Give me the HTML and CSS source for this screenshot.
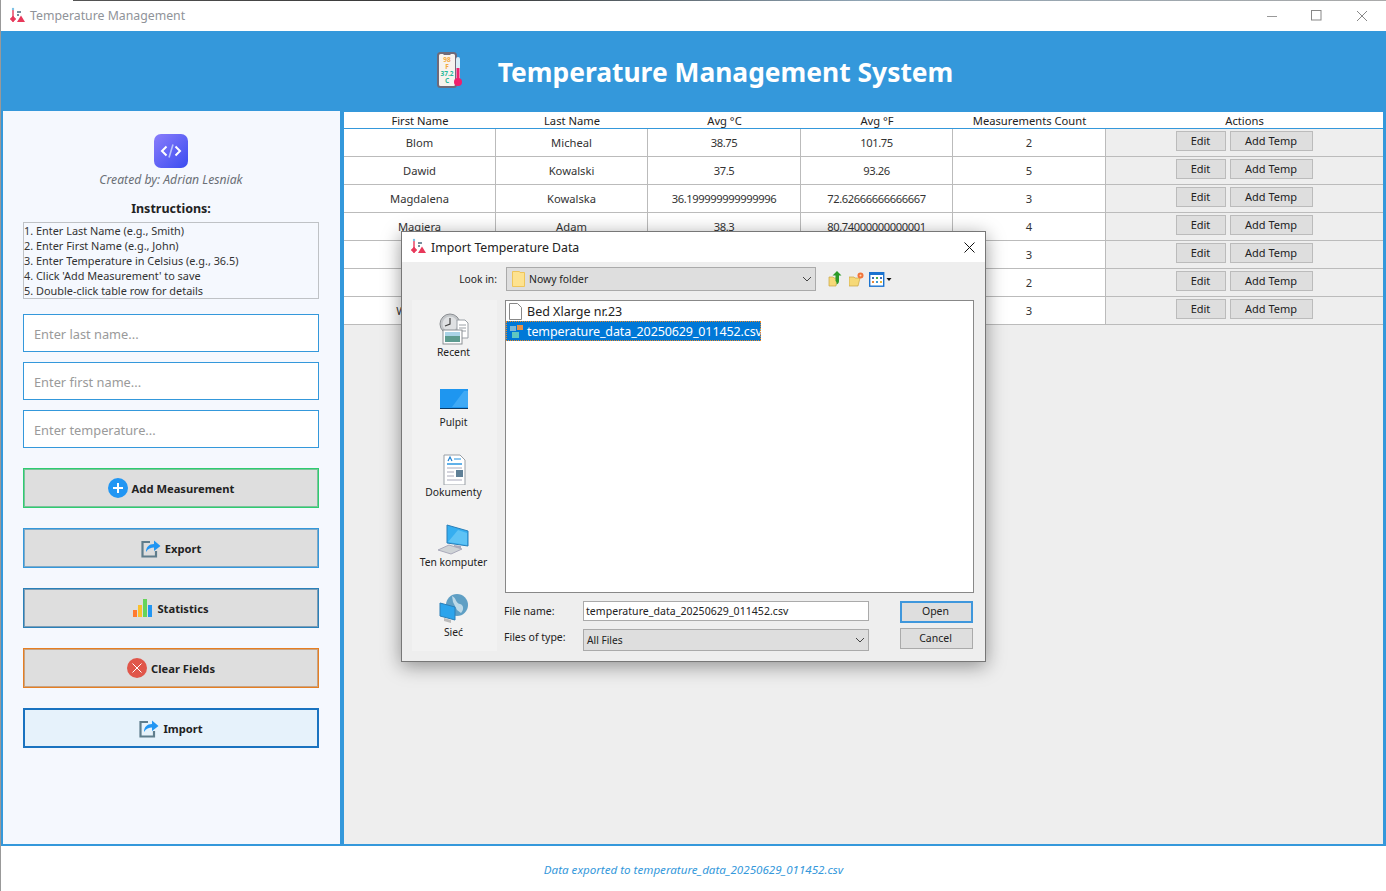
FILE: index.html
```html
<!DOCTYPE html>
<html lang="en">
<head>
<meta charset="utf-8">
<title>Temperature Management</title>
<link rel="stylesheet" href="styles.css">
</head>
<body>
<div class="window">
  <div class="desk-strip"></div>
  <div class="titlebar">
    <svg class="app-icon" width="18" height="18" viewBox="0 0 18 18"><path d="M4 1v10" stroke="#e8385a" stroke-width="1.4"/><circle cx="4" cy="2" r="1.2" fill="#7cc4e8"/><path d="M1 12h6M4 9l-2.5 3L4 15l2.5-3z" fill="#e8385a" stroke="#e8385a" stroke-width=".8"/><path d="M8 5h4M8 8h2" stroke="#4a6a7c" stroke-width="1.3"/><path d="M12 8.500l4 6.500H8z" fill="#e8385a"/></svg>
    <span class="app-title">Temperature Management</span>
    <div class="win-controls">
      <svg width="12" height="12" viewBox="0 0 12 12"><path d="M1 6.500h10" stroke="#999"/></svg>
      <svg width="12" height="12" viewBox="0 0 12 12"><rect x=".5" y=".5" width="9.500" height="9.500" fill="none" stroke="#888"/></svg>
      <svg width="12" height="12" viewBox="0 0 12 12"><path d="M1 1l10 10M11 1L1 11" stroke="#888"/></svg>
    </div>
  </div>

  <header class="banner">
    <svg class="banner-icon" width="30" height="40" viewBox="0 0 30 40">
      <rect x="2" y="1" width="18" height="34" rx="2.500" fill="#f7f3ee" stroke="#6f6a78" stroke-width="2"/>
      <path d="M7.500 1.500h7v1.500h-7z" fill="#6f6a78"/>
      <text x="11" y="10" class="ti ti-o">98</text>
      <text x="11" y="17" class="ti ti-o">F</text>
      <text x="11" y="24" class="ti ti-g">37.2</text>
      <text x="11" y="31" class="ti ti-g">C</text>
      <rect x="20" y="5" width="4" height="24" rx="2" fill="#d8eef8"/>
      <rect x="20.500" y="16" width="3" height="12" fill="#ef1f6b"/>
      <circle cx="22" cy="30" r="4" fill="#ef1f6b"/>
    </svg>
    <h1 class="banner-title">Temperature Management System</h1>
  </header>

  <main class="main">
    <aside class="sidebar">
      <svg class="logo" width="34" height="34" viewBox="0 0 34 34">
        <defs><linearGradient id="lg" x1="0" y1="0" x2="1" y2="1"><stop offset="0" stop-color="#8a7dfb"/><stop offset="1" stop-color="#3a4cf0"/></linearGradient></defs>
        <rect width="34" height="34" rx="7" fill="url(#lg)"/>
        <path d="M12.500 12.500L8 17l4.500 4.500M21.500 12.500L26 17l-4.500 4.500" fill="none" stroke="#fff" stroke-width="2"/>
        <path d="M19 10.500L15 23.500" stroke="#b9c4fb" stroke-width="1.600"/>
      </svg>
      <p class="credit">Created by: Adrian Lesniak</p>
      <h2 class="instr-head">Instructions:</h2>
      <div class="instr">
        <div>1. Enter Last Name (e.g., Smith)</div>
        <div>2. Enter First Name (e.g., John)</div>
        <div>3. Enter Temperature in Celsius (e.g., 36.5)</div>
        <div>4. Click 'Add Measurement' to save</div>
        <div>5. Double-click table row for details</div>
      </div>
      <div class="fields">
        <div class="field">Enter last name...</div>
        <div class="field">Enter first name...</div>
        <div class="field">Enter temperature...</div>
      </div>
      <div class="actions">
        <button class="act act-green">
          <svg width="20" height="20" viewBox="0 0 20 20"><circle cx="10" cy="10" r="10" fill="#2196f3"/><path d="M10 5v10M5 10h10" stroke="#fff" stroke-width="2"/></svg>
          <span>Add Measurement</span>
        </button>
        <button class="act act-blue">
          <svg width="20" height="20" viewBox="0 0 20 20"><path d="M9 4H1.500v14.500H15V13" fill="none" stroke="#5f7d8c" stroke-width="2.200"/><path d="M5 14c0-5 3-8 8-8V2.500l6.500 5.500-6.500 5V9.500c-3 0-6 1-8 4.500z" fill="#2196f3"/></svg>
          <span>Export</span>
        </button>
        <button class="act act-navy">
          <svg width="20" height="20" viewBox="0 0 20 20"><rect x="0" y="12" width="4" height="7" fill="#ff7a2f"/><rect x="5" y="7" width="4" height="12" fill="#fbc02d"/><rect x="10" y="1" width="4" height="18" fill="#66d45a"/><rect x="15" y="7" width="4" height="12" fill="#2196f3"/></svg>
          <span>Statistics</span>
        </button>
        <button class="act act-orange">
          <svg width="20" height="20" viewBox="0 0 20 20"><circle cx="10" cy="10" r="10" fill="#e0564a"/><path d="M5.500 5.500l9 9M14.500 5.500l-9 9" stroke="#fff" stroke-width="1"/></svg>
          <span>Clear Fields</span>
        </button>
        <button class="act act-import">
          <svg width="20" height="20" viewBox="0 0 20 20"><path d="M9 4H1.500v14.500H15V13" fill="none" stroke="#5f7d8c" stroke-width="2.200"/><path d="M5 14c0-5 3-8 8-8V2.500l6.500 5.500-6.500 5V9.500c-3 0-6 1-8 4.500z" fill="#2196f3"/></svg>
          <span>Import</span>
        </button>
      </div>
    </aside>

    <section class="table-area">
      <table class="grid">
        <colgroup><col class="c1"><col class="c2"><col class="c3"><col class="c4"><col class="c5"><col></colgroup>
        <thead>
          <tr><th>First Name</th><th>Last Name</th><th>Avg °C</th><th>Avg °F</th><th>Measurements Count</th><th>Actions</th></tr>
        </thead>
        <tbody>
          <tr><td>Blom</td><td>Micheal</td><td class="n">38.75</td><td class="n">101.75</td><td>2</td><td class="acts"><div class="acts-in"><span class="mini mini-e">Edit</span><span class="mini mini-a">Add Temp</span></div></td></tr>
          <tr><td>Dawid</td><td>Kowalski</td><td class="n">37.5</td><td class="n">93.26</td><td>5</td><td class="acts"><div class="acts-in"><span class="mini mini-e">Edit</span><span class="mini mini-a">Add Temp</span></div></td></tr>
          <tr><td>Magdalena</td><td>Kowalska</td><td class="n">36.199999999999996</td><td class="n">72.62666666666667</td><td>3</td><td class="acts"><div class="acts-in"><span class="mini mini-e">Edit</span><span class="mini mini-a">Add Temp</span></div></td></tr>
          <tr><td>Magiera</td><td>Adam</td><td class="n">38.3</td><td class="n">80.74000000000001</td><td>4</td><td class="acts"><div class="acts-in"><span class="mini mini-e">Edit</span><span class="mini mini-a">Add Temp</span></div></td></tr>
          <tr><td></td><td></td><td></td><td></td><td>3</td><td class="acts"><div class="acts-in"><span class="mini mini-e">Edit</span><span class="mini mini-a">Add Temp</span></div></td></tr>
          <tr><td></td><td></td><td></td><td></td><td>2</td><td class="acts"><div class="acts-in"><span class="mini mini-e">Edit</span><span class="mini mini-a">Add Temp</span></div></td></tr>
          <tr><td>Wojciech</td><td></td><td></td><td></td><td>3</td><td class="acts"><div class="acts-in"><span class="mini mini-e">Edit</span><span class="mini mini-a">Add Temp</span></div></td></tr>
        </tbody>
      </table>
    </section>
  </main>

  <footer class="status">Data exported to temperature_data_20250629_011452.csv</footer>

  <div class="dialog">
    <div class="dlg-title">
      <svg width="18" height="18" viewBox="0 0 18 18"><path d="M4 1v10" stroke="#e8385a" stroke-width="1.4"/><circle cx="4" cy="2" r="1.2" fill="#7cc4e8"/><path d="M1 12h6M4 9l-2.500 3L4 15l2.500-3z" fill="#e8385a" stroke="#e8385a" stroke-width=".8"/><path d="M8 5h4M8 8h2" stroke="#4a6a7c" stroke-width="1.300"/><path d="M12 8.500l4 6.500H8z" fill="#e8385a"/></svg>
      <span class="dlg-name">Import Temperature Data</span>
      <svg class="dlg-close" width="11" height="11" viewBox="0 0 11 11"><path d="M.5.5l10 10M10.500.5l-10 10" stroke="#111"/></svg>
    </div>
    <div class="dlg-body">
      <div class="look-row">
        <span class="look-label">Look in:</span>
        <div class="combo combo-look">
          <svg width="13" height="16" viewBox="0 0 13 16"><path d="M.5.500h7l.5 1h4.500v14H.5z" fill="#fde28f" stroke="#eec55a"/></svg>
          <span>Nowy folder</span>
          <svg class="chev" width="10" height="6" viewBox="0 0 10 6"><path d="M1 1l4 4 4-4" fill="none" stroke="#444"/></svg>
        </div>
        <div class="tools">
          <svg width="16" height="16" viewBox="0 0 16 16"><path d="M1 6h4l1 1h3l-1 8H1z" fill="#f6d978" stroke="#c9a542" stroke-width=".7"/><path d="M9 0l4.500 4.500H11V10c0 2-1 3-2.500 3.500C9 12 8.500 11 7.500 10V4.500H4.500z" fill="#2b9a27"/></svg>
          <svg width="15" height="16" viewBox="0 0 15 16"><path d="M0 6h5l1 1h5l-2 8H0z" fill="#f6d978" stroke="#c9a542" stroke-width=".7"/><circle cx="11.500" cy="4.500" r="3" fill="#f2743a"/><circle cx="11.500" cy="4.500" r="1" fill="#ffd9b0"/></svg>
          <svg width="23" height="15" viewBox="0 0 23 15"><rect x=".7" y=".7" width="14" height="13.500" fill="#fff" stroke="#1a73d0" stroke-width="1.400"/><path d="M0 1h15v2H0z" fill="#1a73d0"/><path d="M3 5h2v2H3z" fill="#3d6fb4"/><path d="M7 5h2v2H7z" fill="#4aa84a"/><path d="M11 5h2v2h-2z" fill="#3d6fb4"/><path d="M3 9h2v2H3z" fill="#e8883a"/><path d="M7 9h2v2H7z" fill="#3d9ad0"/><path d="M11 9h2v2h-2z" fill="#e8b53a"/><path d="M17.500 6h5l-2.500 3z" fill="#111"/></svg>
        </div>
      </div>
      <div class="dlg-main">
        <nav class="places">
          <div class="place">
            <svg width="32" height="32" viewBox="0 0 32 32"><circle cx="12" cy="11" r="10" fill="#c3c6c9" stroke="#8b8f93"/><circle cx="12" cy="11" r="7.500" fill="#dfe1e3"/><path d="M12 5v6l-5 2" fill="none" stroke="#444" stroke-width="1.200"/><path d="M19 7h8l3 3v15H19z" fill="#fff" stroke="#9aa0a6"/><path d="M21 12h7M21 15h7M21 18h7" stroke="#9aa0a6"/><rect x="5" y="17" width="19" height="14" fill="#fff" stroke="#8b8f93"/><rect x="7" y="19" width="15" height="10" fill="#5d9b8f"/><path d="M7 19h15v4H7z" fill="#a9d3e6"/></svg>
            <span>Recent</span>
          </div>
          <div class="place">
            <svg width="32" height="32" viewBox="0 0 32 32"><rect x="2" y="6" width="28" height="20" fill="#1e96f0"/><path d="M14 24l12-16h4v16z" fill="#3fa9f5"/><path d="M2 25h28v1H2z" fill="#0b3a66"/></svg>
            <span>Pulpit</span>
          </div>
          <div class="place">
            <svg width="32" height="32" viewBox="0 0 32 32"><path d="M6 2h16l5 5v25H6z" fill="#fff" stroke="#9aa0a6"/><path d="M9 11h15" stroke="#1e90e0" stroke-width="1.400"/><path d="M10 8l2-4 2 4" fill="none" stroke="#1e80d0" stroke-width="1.200"/><path d="M16 6h7" stroke="#1e90e0"/><path d="M9 15h15M9 19h7M9 23h7M9 27h15" stroke="#aab"/><rect x="18" y="17" width="7" height="7" fill="#5f8097"/></svg>
            <span>Dokumenty</span>
          </div>
          <div class="place">
            <svg width="34" height="32" viewBox="0 0 34 32"><path d="M10 2l21 6v15l-21-3z" fill="#35aef0" stroke="#2a7fb8"/><path d="M11 19l10-12 9 3v12z" fill="#5ec3f5"/><path d="M17 22l7 1v3l-7-1z" fill="#aab"/><path d="M1 27l11-5 13 4-11 5z" fill="#cfd3d6" stroke="#aab"/></svg>
            <span>Ten komputer</span>
          </div>
          <div class="place">
            <svg width="32" height="32" viewBox="0 0 32 32"><circle cx="19" cy="12" r="11" fill="#5f9fc4"/><path d="M14 3c5 2 3 7 8 8 4 1 4 6 1 9l-4-3-4-8z" fill="#bcd9e8"/><path d="M2 10l15 4v13L2 23z" fill="#2ca4ec" stroke="#2a7fb8"/><path d="M6 25l7 2v3l-7-2z" fill="#bbb"/></svg>
            <span>Sieć</span>
          </div>
        </nav>
        <div class="dlg-right">
          <div class="files">
            <div class="file">
              <svg width="14" height="17" viewBox="0 0 14 17"><path d="M.5.500h8l4 4v12H.5z" fill="#fff" stroke="#888"/></svg>
              <span>Bed Xlarge nr.23</span>
            </div>
            <div class="file file-sel">
              <svg width="14" height="15" viewBox="0 0 14 15"><rect x="1" y="2" width="6" height="5" fill="#7db8d8"/><rect x="8" y="1" width="6" height="5" fill="#e89248"/><rect x="3" y="8" width="7" height="6" fill="#5fc8c0"/></svg>
              <span>temperature_data_20250629_011452.csv</span>
            </div>
          </div>
          <div class="form-grid">
            <span class="flabel flabel-a">File name:</span>
            <div class="finput">temperature_data_20250629_011452.csv</div>
            <span class="fbtn fbtn-open">Open</span>
            <span class="flabel flabel-b">Files of type:</span>
            <div class="combo combo-type">
              <span>All Files</span>
              <svg class="chev" width="10" height="6" viewBox="0 0 10 6"><path d="M1 1l4 4 4-4" fill="none" stroke="#444"/></svg>
            </div>
            <span class="fbtn fbtn-cancel">Cancel</span>
          </div>
        </div>
      </div>
    </div>
  </div>
</div>
</body>
</html>
```
FILE: styles.css
```css
* { box-sizing: border-box; }
html, body { margin: 0; padding: 0; background: #fff; }
body { font-family: "Noto Sans", "Open Sans", sans-serif; font-size: 11.2px; color: #222; }
.window { position: relative; width: 1386px; height: 891px; display: flex; flex-direction: column; border-left: 1px solid #999; overflow: hidden; }
.desk-strip { position: absolute; left: 72px; right: 0; top: 0; height: 1px; background: linear-gradient(90deg, #555 0, #333 30%, #8fa4b4 60%, #aaa 100%); }

.titlebar { height: 31px; display: flex; align-items: center; padding: 0 0 0 8px; background: #fff; flex: none; }
.app-icon { flex: none; }
.app-title { margin-left: 3px; font-size: 12.300px; color: #8f9399; }
.win-controls { margin-left: auto; display: flex; justify-content: flex-end; gap: 33px; padding-right: 18px; align-items: center; }

.banner { height: 80px; flex: none; background: #3498db; display: flex; align-items: center; justify-content: center; padding-left: 2px; gap: 32px; }
.banner-icon { flex: none; margin-top: 2px; }
.ti { font-family: "Noto Sans", sans-serif; font-size: 6.500px; font-weight: 700; text-anchor: middle; }
.ti-o { fill: #f3a93c; }
.ti-g { fill: #26b99a; }
.banner-title { margin: 2px 0 0; font-size: 26.400px; font-weight: 700; color: #fff; }

.main { height: 735px; flex: none; display: flex; gap: 4px; background: #3498db; padding: 0 3px 2px 2px; }
.sidebar { width: 337px; flex: none; background: #f5f8fe; padding: 23px 21px 0 20px; display: flex; flex-direction: column; align-items: stretch; }
.logo { align-self: center; flex: none; }
.credit { margin: 3px 0 0; text-align: center; font-style: italic; color: #6b6f76; font-size: 12.200px; line-height: 17px; }
.instr-head { margin: 12px 0 0; text-align: center; font-size: 12.500px; font-weight: 700; color: #222; line-height: 18px; }
.instr { margin-top: 4px; height: 77px; border: 1px solid #bfc2c6; padding: 0; line-height: 15px; font-size: 10.900px; color: #333; white-space: nowrap; }
.fields { margin-top: 15px; display: flex; flex-direction: column; gap: 10px; }
.field { height: 38px; background: #fff; border: 1px solid #3498db; display: flex; align-items: center; padding: 1px 0 0 10px; color: #9a9a9a; font-size: 12.800px; }
.actions { margin-top: 20px; display: flex; flex-direction: column; gap: 20px; }
.act { height: 40px; margin: 0; padding: 0; background: #dedede; font: inherit; font-size: 11.200px; font-weight: 700; color: #222; display: flex; align-items: center; justify-content: center; gap: 4px; border: 1px solid #999; }
.act-green { border-color: #2ecc71; box-shadow: inset 0 0 0 1px #7cc39a; }
.act-blue { border-color: #3498db; box-shadow: inset 0 0 0 1px #7fa9c6; }
.act-navy { border-color: #2980b9; box-shadow: inset 0 0 0 1px #7d9db5; }
.act-orange { border-color: #e67e22; box-shadow: inset 0 0 0 1px #c8a484; }
.act-import { background: #e6f2fb; border: 2px solid #1a73c0; }

.table-area { flex: 1; margin-top: 1px; background: #eeeeee; min-width: 0; }
.grid { width: 1039px; table-layout: fixed; border-collapse: separate; border-spacing: 0; font-size: 11.200px; }
.c1 { width: 152px; } .c2 { width: 152px; } .c3 { width: 153px; } .c4 { width: 152px; } .c5 { width: 153px; }
.grid th { height: 17px; padding: 1px 0 0; background: #fff; font-weight: 400; line-height: 15px; border-bottom: 1px solid #3498db; vertical-align: bottom; white-space: nowrap; }
.grid td { height: 28px; padding: 0 0 1px; background: #fff; text-align: center; border-right: 1px solid #bbb; border-bottom: 1px solid #bbb; white-space: nowrap; color: #333; }
.grid td.n { letter-spacing: -.4px; }
.grid td.acts { background: #eee; border-right: 0; padding: 0; vertical-align: top; }
.acts-in { display: flex; justify-content: center; gap: 4px; padding: 2px 0 0 0; }
.mini { height: 20px; background: #dedede; border: 1px solid #bbb; display: flex; align-items: center; justify-content: center; color: #222; font-size: 11px; padding: 0 1px 1px 0; }
.mini-e { width: 50px; }
.mini-a { width: 83px; }

.status { flex: 1; display: flex; align-items: center; justify-content: center; font-style: italic; color: #3498db; background: #fff; padding-top: 1px; font-size: 11.600px; }

.dialog { position: absolute; left: 400px; top: 231px; width: 585px; height: 431px; border: 1px solid #777; background: #eee; box-shadow: 0 4px 18px rgba(0,0,0,.4); display: flex; flex-direction: column; }
.dlg-title { height: 30px; flex: none; background: #fff; display: flex; align-items: center; padding: 0 10px 0 8px; gap: 3px; }
.dlg-name { font-size: 12.300px; color: #222; }
.dlg-close { margin-left: auto; }
.dlg-body { flex: 1; padding: 5px 11px 10px 10px; display: flex; flex-direction: column; }
.look-row { height: 24px; display: flex; align-items: center; flex: none; }
.look-label { width: 85px; text-align: right; font-size: 10.300px; padding-bottom: 1px; }
.combo { background: #dedede; border: 1px solid #aaa; display: flex; align-items: center; font-size: 10.400px; }
.combo-look { width: 310px; height: 24px; margin-left: 9px; padding: 0 3px 1px 5px; gap: 4px; }
.chev { margin-left: auto; flex: none; }
.tools { margin-left: 12px; display: flex; align-items: center; gap: 5px; }
.dlg-main { flex: 1; margin-top: 9px; display: flex; }
.places { width: 85px; flex: none; background: #f2f2f2; display: flex; flex-direction: column; font-size: 10.300px; padding-right: 2px; }
.place { height: 70px; display: flex; flex-direction: column; align-items: center; justify-content: flex-start; padding-top: 13px; line-height: 14px; }
.place svg { flex: none; }
.dlg-right { flex: 1; margin-left: 8px; display: flex; flex-direction: column; min-width: 0; }
.files { height: 293px; background: #fff; border: 1px solid #888; padding: 0; flex: none; }
.file { height: 20px; display: flex; align-items: center; gap: 4px; padding-left: 3px; font-size: 12.500px; white-space: nowrap; width: 255px; }
.file svg { flex: none; }
.file-sel { background: #0078d7; color: #fff; outline: 1px dotted #f08a24; outline-offset: -1px; letter-spacing: -.11px; }
.form-grid { margin-top: 8px; display: grid; grid-template-columns: 78px 286px 104px; grid-template-rows: 22px 22px; row-gap: 6px; align-items: center; font-size: 10.500px; }
.flabel { white-space: nowrap; align-self: start; line-height: 15px; }
.flabel-a { margin: 3px 0 0 -1px; }
.flabel-b { margin: 1px 0 0 -1px; }
.finput { height: 20px; width: 286px; background: #fff; border: 1px solid #aaa; padding-left: 2px; line-height: 18px; align-self: start; white-space: nowrap; overflow: hidden; letter-spacing: .05px; }
.combo-type { height: 22px; width: 286px; padding: 0 3px 0 3px; font-size: 10.200px; }
.fbtn { justify-self: end; width: 73px; height: 21px; background: #dedede; border: 1px solid #aaa; display: flex; align-items: center; justify-content: center; padding: 0 2px 1px 0; }
.fbtn-open { height: 22px; border: 2px solid #3f97dc; padding: 0 2px 2px 0; }
.fbtn-cancel { align-self: start; margin-top: -1px; }
```
